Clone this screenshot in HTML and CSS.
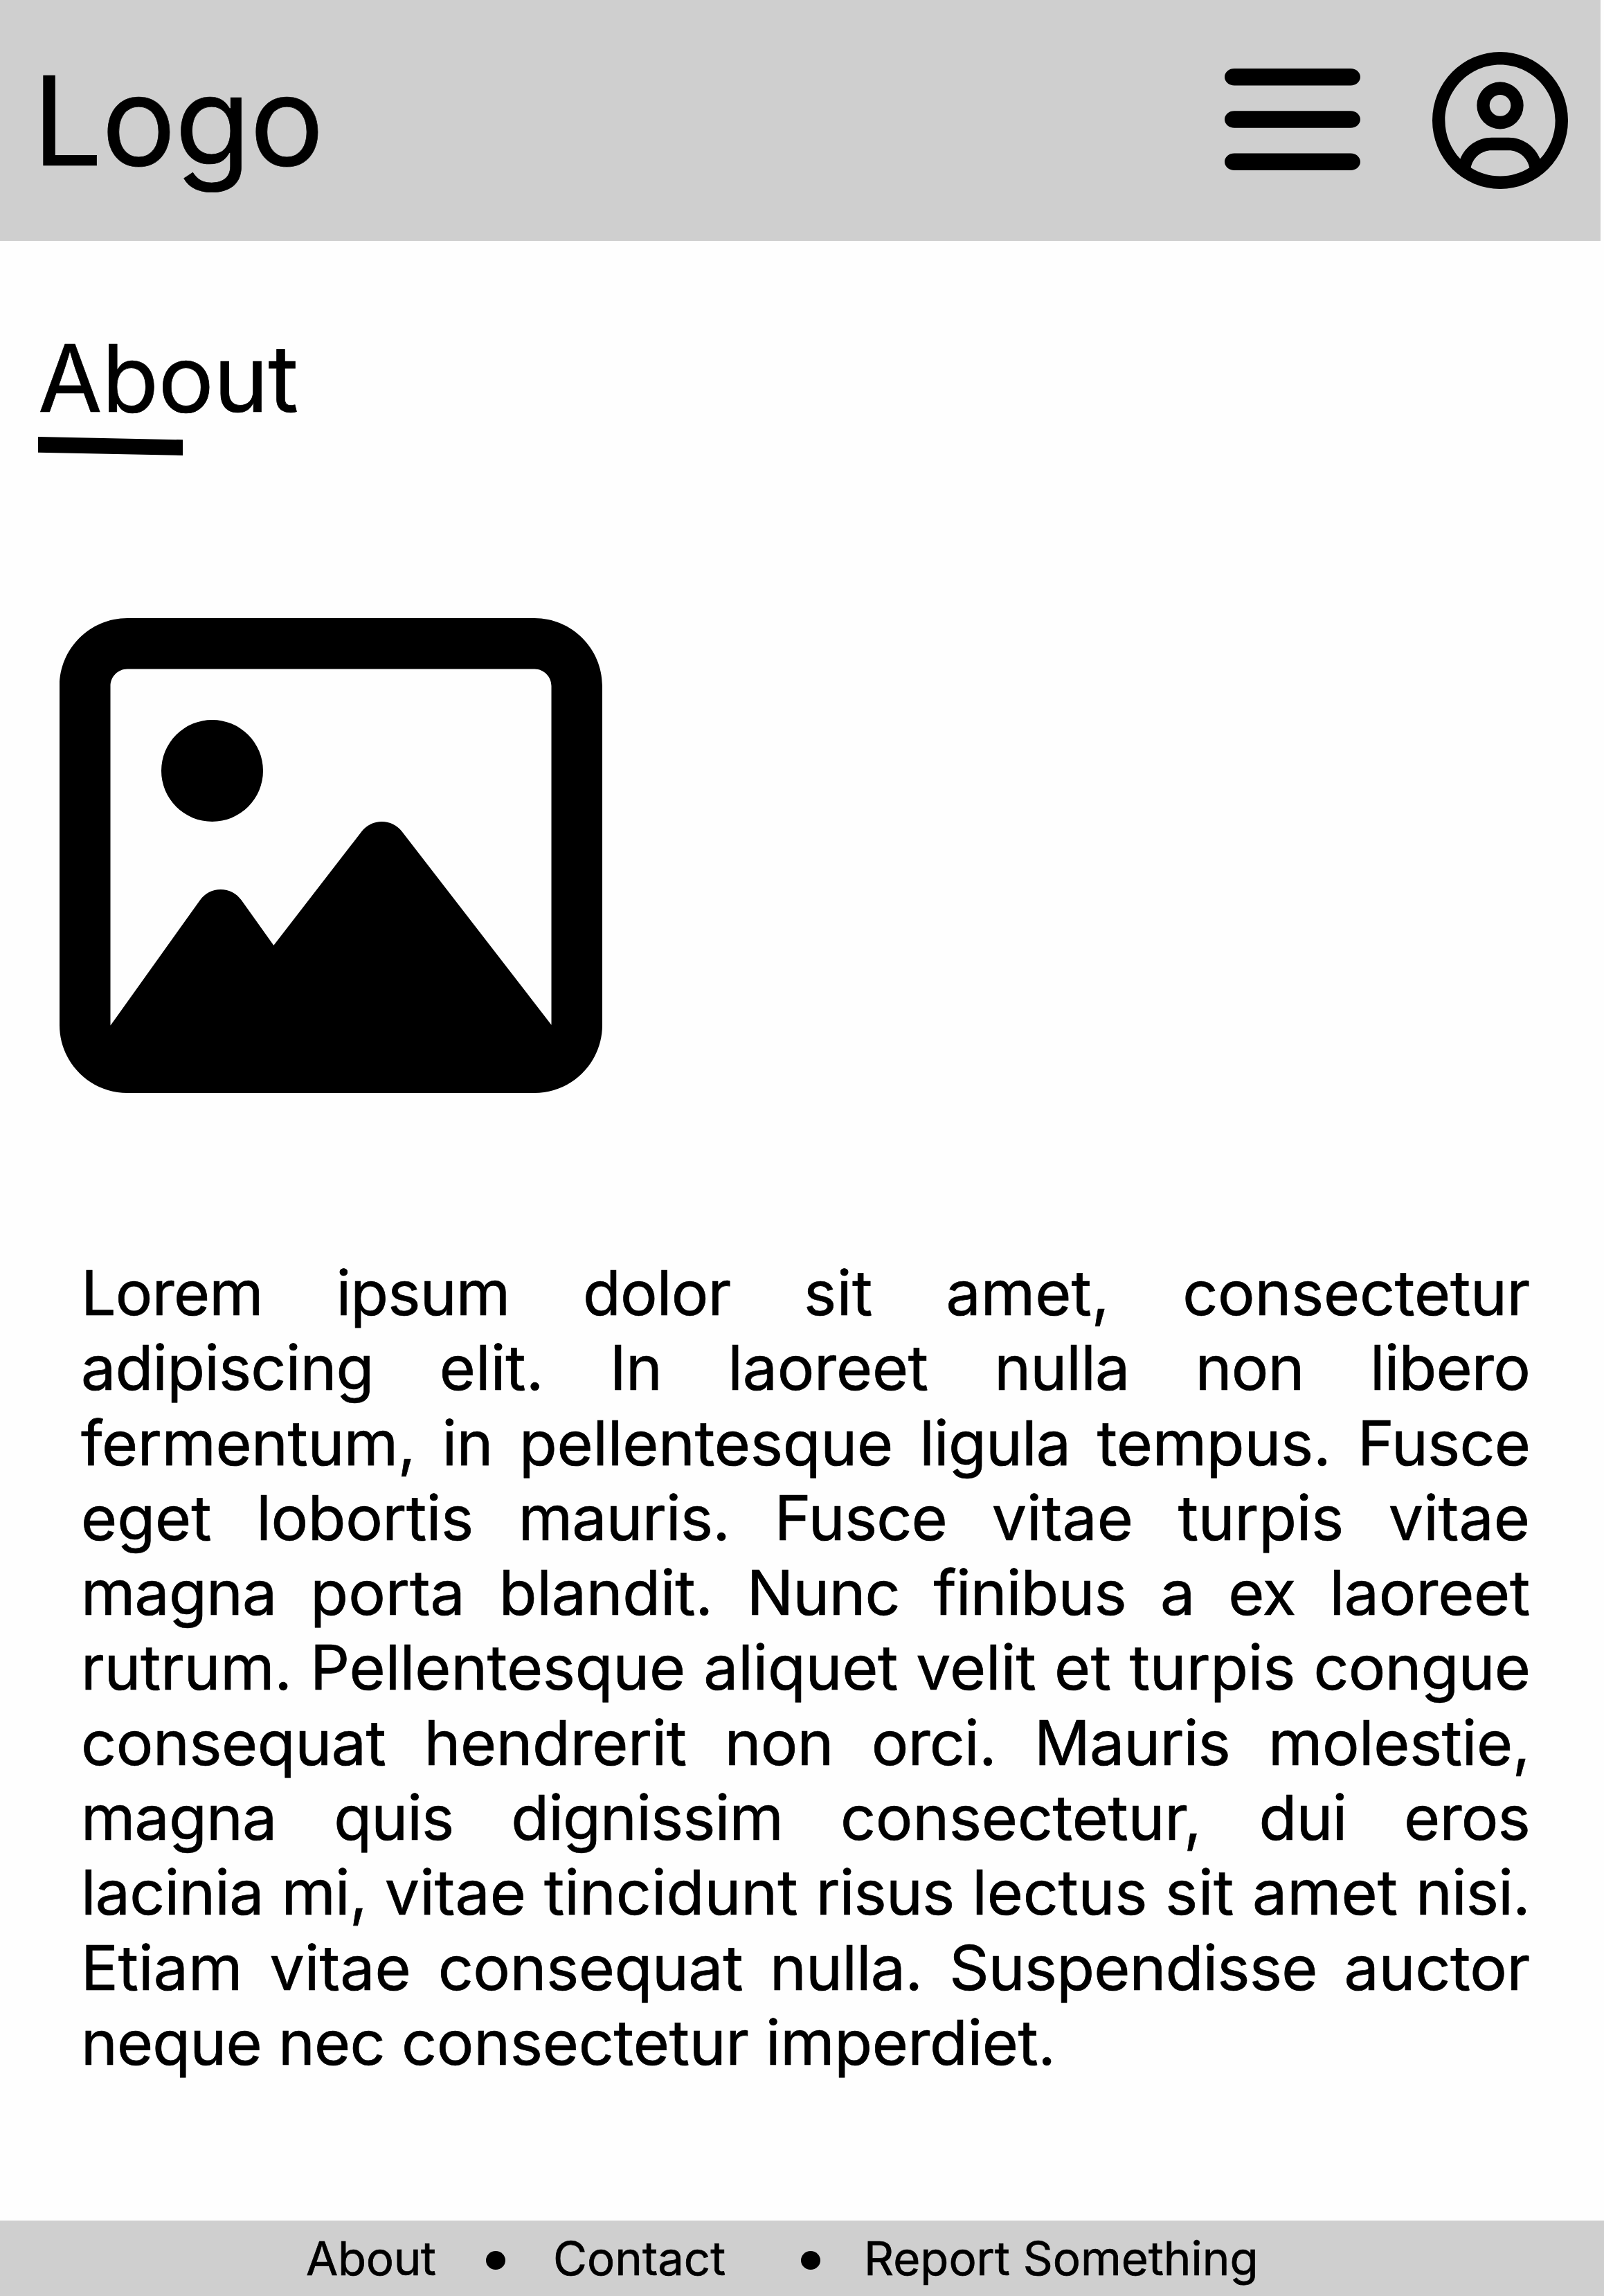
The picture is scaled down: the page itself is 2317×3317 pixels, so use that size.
FILE: index.html
```html
<!DOCTYPE html>
<html lang="en">
<head>
<meta charset="utf-8">
<title>About</title>
<link rel="stylesheet" href="styles.css">
</head>
<body>
<header class="header">
  <div class="logo">Logo</div>
  <nav class="actions">
    <svg class="icon-menu" viewBox="0 64 448 384" preserveAspectRatio="none"><path d="M0 96C0 78.300 14.300 64 32 64H416c17.700 0 32 14.300 32 32s-14.300 32-32 32H32C14.300 128 0 113.700 0 96zM0 256c0-17.700 14.300-32 32-32H416c17.700 0 32 14.300 32 32s-14.300 32-32 32H32c-17.700 0-32-14.300-32-32zM448 416c0 17.700-14.300 32-32 32H32c-17.700 0-32-14.300-32-32s14.300-32 32-32H416c17.700 0 32 14.300 32 32z"/></svg>
    <svg class="icon-user" viewBox="0 0 512 512" preserveAspectRatio="none"><path d="M406.500 399.600C387.400 352.900 341.500 320 288 320H224c-53.500 0-99.400 32.900-118.500 79.600C69.900 362.200 48 311.700 48 256C48 141.100 141.100 48 256 48s208 93.100 208 208c0 55.700-21.900 106.200-57.500 143.600zm-40.100 32.700C334.400 452.400 296.600 464 256 464s-78.400-11.600-110.500-31.700c7.300-36.700 39.700-64.300 78.500-64.300h64c38.800 0 71.200 27.600 78.500 64.300zM256 512A256 256 0 1 0 256 0a256 256 0 1 0 0 512zm0-272a40 40 0 1 1 0-80 40 40 0 1 1 0 80zm-88-40a88 88 0 1 0 176 0 88 88 0 1 0 -176 0z"/></svg>
  </nav>
</header>
<main class="main">
  <h1 class="title">About</h1>
  <svg class="underline" viewBox="0 0 209 27"><path d="M0 0L209 4.300V27L0 22.700z"/></svg>
  <svg class="picture" viewBox="0 32 512 448"><path d="M448 80c8.800 0 16 7.200 16 16V415.800l-5-6.500-136-176c-4.500-5.900-11.600-9.300-19-9.300s-14.400 3.400-19 9.300L202 340.700l-30.500-42.700C167 291.700 159.800 288 152 288s-15 3.700-19.500 10.100l-80 112L48 416.300l0-.3V96c0-8.800 7.200-16 16-16H448zM64 32C28.700 32 0 60.700 0 96V416c0 35.300 28.700 64 64 64H448c35.300 0 64-28.700 64-64V96c0-35.300-28.700-64-64-64H64zm80 192a48 48 0 1 0 0-96 48 48 0 1 0 0 96z"/></svg>
  <p class="text">
    <span class="line">Lorem ipsum dolor <span class="wide">sit</span> <span class="even">amet,</span> <span class="snug">consectetur</span></span>
    <span class="line">adipiscing <span class="even">elit.</span> In <span class="snug">laoreet</span> nulla non libero</span>
    <span class="line"><span class="close">fermentum,</span> in <span class="snug">pellentesque</span> ligula <span class="snug">tempus.</span> Fusce</span>
    <span class="line"><span class="even">eget</span> <span class="close">lobortis</span> mauris. Fusce <span class="even">vitae</span> <span class="snug">turpis</span> <span class="even">vitae</span></span>
    <span class="line">magna <span class="even">porta</span> <span class="snug">blandit.</span> Nunc finibus a ex <span class="snug">laoreet</span></span>
    <span class="line"><span class="snug">rutrum.</span> <span class="snug">Pellentesque</span> <span class="snug">aliquet</span> <span class="even">velit</span> <span class="wide">et</span> <span class="snug">turpis</span> congue</span>
    <span class="line"><span class="close">consequat</span> <span class="close">hendrerit</span> non orci. Mauris <span class="close">molestie,</span></span>
    <span class="line">magna quis dignissim <span class="snug">consectetur,</span> dui eros</span>
    <span class="line">lacinia mi, <span class="even">vitae</span> <span class="even">tincidunt</span> risus <span class="snug">lectus</span> <span class="wide">sit</span> <span class="even">amet</span> nisi.</span>
    <span class="line"><span class="even">Etiam</span> <span class="even">vitae</span> <span class="close">consequat</span> nulla. Suspendisse <span class="snug">auctor</span></span>
    <span class="line line-last">neque nec <span class="snug">consectetur</span> <span class="close">imperdiet.</span></span>
  </p>
</main>
<footer class="footer">
  <span class="link link-about">About</span>
  <span class="dot"></span>
  <span class="link link-contact">Contact</span>
  <span class="dot"></span>
  <span class="link link-report">Report Something</span>
</footer>
</body>
</html>
```
FILE: styles.css
```css
* { box-sizing: border-box; }

body {
  margin: 0;
  height: 3317px;
  display: flex;
  flex-direction: column;
  background: #fefefe;
  color: #000;
  font-family: Inter, sans-serif;
  -webkit-text-stroke: 0.7px #000;
  overflow: hidden;
}

svg { display: block; flex: none; }

.header {
  width: 2312px;
  height: 348px;
  flex: none;
  display: flex;
  align-items: center;
  justify-content: space-between;
  padding: 0 47px 0 47px;
  background: #cfcfcf;
}

.logo { font-size: 179px; line-height: 217px; letter-spacing: -1.500px; }

.actions { display: flex; align-items: center; gap: 104px; }
.icon-menu { width: 196px; height: 147px; margin-top: -3px; }
.icon-user { width: 196px; height: 198px; }

.main { flex: 1; padding-top: 117px; }

.title {
  margin: 0 0 4px 55px;
  font-size: 134.200px;
  line-height: 162px;
  font-weight: 400;
  letter-spacing: -0.600px;
}

.underline { width: 209px; height: 27px; margin-left: 55px; }
.picture { width: 784px; height: 686px; margin: 235px 0 0 86px; }

.text {
  width: 2093px;
  margin: 235px 0 0 117px;
  font-size: 89.500px;
  line-height: 108.300px;
  letter-spacing: -0.0095em;
}

.line { display: block; text-align: justify; text-align-last: justify; }
.line-last { text-align-last: left; }

/* Tracking steps for words, from tightest to loosest */
.close { letter-spacing: -0.005em; }
.snug { letter-spacing: -0.003em; }
.even { letter-spacing: 0; }
.wide { letter-spacing: 0.006em; }

.footer {
  height: 109px;
  flex: none;
  display: flex;
  align-items: center;
  padding-left: 442px;
  background: #cfcfcf;
  font-size: 67.100px;
  line-height: 81px;
  white-space: nowrap;
}

.link-about { width: 260px; letter-spacing: -0.300px; }
.link-contact { width: 288px; margin-left: 69px; }
.link-report { margin-left: 63px; }
.dot { width: 28px; height: 27px; border-radius: 50%; background: #000; margin-top: 6px; }
.link-contact + .dot { margin-left: 70px; }
```
